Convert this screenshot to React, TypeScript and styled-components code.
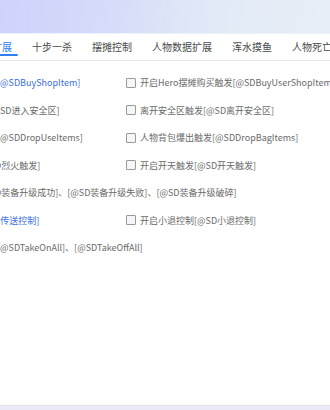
import React from "react";
import styled, { createGlobalStyle } from "styled-components";

const Global = createGlobalStyle`
  html, body { margin: 0; padding: 0; background: #ffffff; }
  body { font-family: "Noto Sans CJK SC", "Noto Sans", sans-serif; }
`;

const Page = styled.div`
  width: 330px;
  height: 410px;
  display: flex;
  flex-direction: column;
  overflow: hidden;
  background: #ffffff;
`;

const Header = styled.div`
  height: 34px;
  flex: none;
  background: linear-gradient(100deg, #cdd3fb 0%, #d6dcf9 35%, #dde7f7 55%, #e4ecf7 75%, #e8eef7 100%);
  border-bottom: 1px solid #eef0fb;
  box-sizing: border-box;
`;

const TabBar = styled.div`
  height: 27px;
  flex: none;
  box-sizing: border-box;
  border-bottom: 1px solid #e6e6e6;
  overflow: hidden;
  background: #ffffff;
`;

const TabList = styled.div`
  display: flex;
  height: 100%;
  margin-left: -38px;
`;

const Tab = styled.div<{ $active?: boolean }>`
  position: relative;
  flex: none;
  padding: 0 10px;
  display: flex;
  align-items: center;
  font-size: 10px;
  line-height: 1;
  white-space: nowrap;
  color: ${(p) => (p.$active ? "#2f7ff0" : "#4a4a4a")};
`;

const Underline = styled.span`
  position: absolute;
  left: 4px;
  right: 4px;
  bottom: 4px;
  height: 2px;
  border-radius: 1px;
  background: #2f80f0;
`;

const Content = styled.div`
  flex: 1;
  overflow: hidden;
  padding-top: 8px;
`;

const Grid = styled.div`
  display: grid;
  grid-template-columns: 126px 1fr;
  grid-auto-rows: 27.5px;
  font-size: 9px;
  color: #6a6a6a;
  white-space: nowrap;
  overflow: hidden;
`;

const Cell = styled.div<{ $span?: boolean }>`
  display: flex;
  align-items: center;
  overflow: hidden;
  grid-column: ${(p) => (p.$span ? "1 / span 2" : "auto")};
`;

const Label = styled.span<{ $link?: boolean; $shift?: number }>`
  color: ${(p) => (p.$link ? "#3b6fe0" : "#6a6a6a")};
  margin-left: ${(p) => -(p.$shift ?? 0)}px;
`;

const Check = styled.label`
  display: flex;
  align-items: center;
  gap: 4px;
  color: #6a6a6a;
`;

const Box = styled.span`
  width: 8px;
  height: 8px;
  flex: none;
  border: 1px solid #9a9a9a;
  border-radius: 1px;
  background: #f6f6f6;
`;

const Footer = styled.div`
  height: 4px;
  flex: none;
  border-top: 1px solid #e2e2e2;
  background: #e9ebf8;
`;

const tabs = ["功能扩展", "十步一杀", "摆摊控制", "人物数据扩展", "浑水摸鱼", "人物死亡"];

type Row = {
  left: string;
  link?: boolean;
  shift?: number;
  right?: string;
};

const rows: Row[] = [
  { left: "@SDBuyShopItem]", link: true, right: "开启Hero摆摊购买触发[@SDBuyUserShopItem]" },
  { left: "SD进入安全区]", right: "离开安全区触发[@SD离开安全区]" },
  { left: "@SDDropUseItems]", right: "人物背包爆出触发[@SDDropBagItems]" },
  { left: "D烈火触发]", shift: 5, right: "开启开天触发[@SD开天触发]" },
  { left: "D装备升级成功]、[@SD装备升级失败]、[@SD装备升级破碎]", shift: 5 },
  { left: "D传送控制]", link: true, shift: 6, right: "开启小退控制[@SD小退控制]" },
  { left: "@SDTakeOnAll]、[@SDTakeOffAll]" },
];

export default function App() {
  return (
    <>
      <Global />
      <Page>
        <Header />
        <TabBar>
          <TabList>
            {tabs.map((t, i) => (
              <Tab key={t} $active={i === 0}>
                {t}
                {i === 0 && <Underline />}
              </Tab>
            ))}
          </TabList>
        </TabBar>
        <Content>
          <Grid>
            {rows.map((r, i) =>
              r.right ? (
                <React.Fragment key={i}>
                  <Cell>
                    <Label $link={r.link} $shift={r.shift}>{r.left}</Label>
                  </Cell>
                  <Cell>
                    <Check>
                      <Box />
                      <span>{r.right}</span>
                    </Check>
                  </Cell>
                </React.Fragment>
              ) : (
                <Cell key={i} $span>
                  <Label $link={r.link} $shift={r.shift}>{r.left}</Label>
                </Cell>
              )
            )}
          </Grid>
        </Content>
        <Footer />
      </Page>
    </>
  );
}
